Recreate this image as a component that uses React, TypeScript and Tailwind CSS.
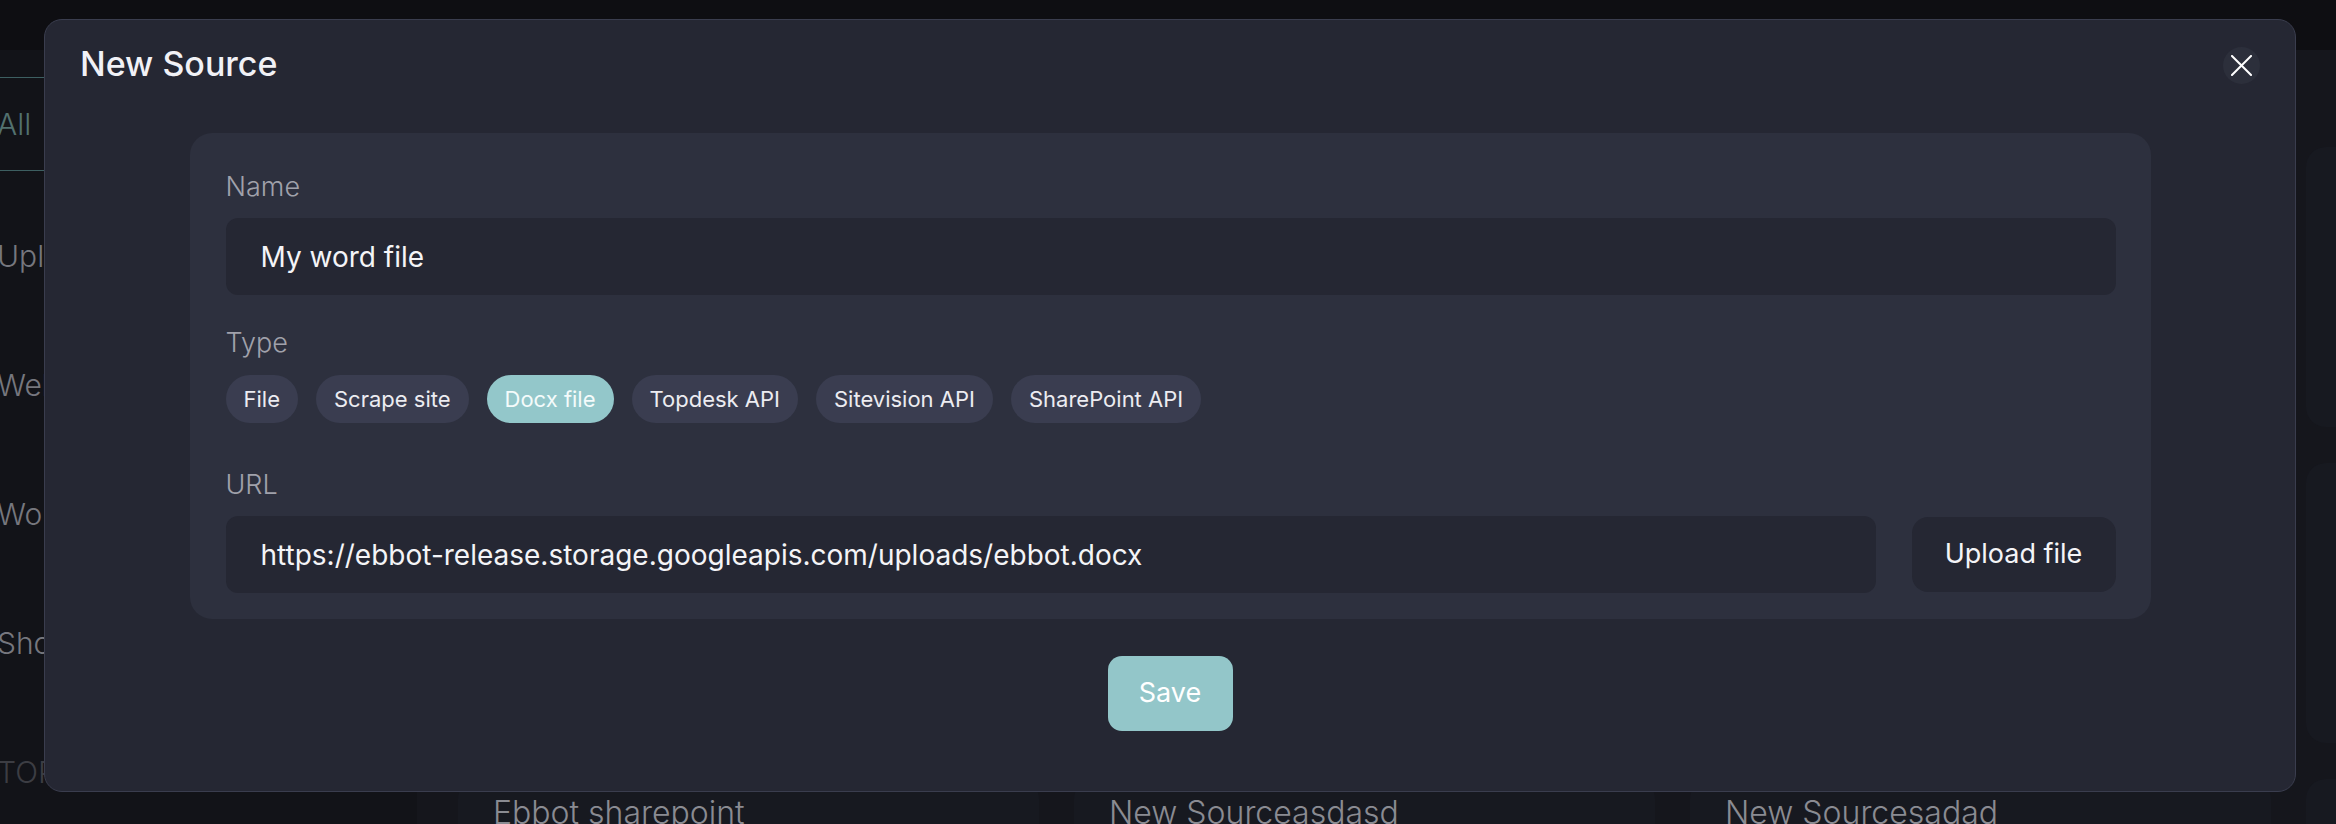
import React from "react";

const sideItems = ["Uploaded files", "Websites", "Word files", "Shortcuts", "TOPDESK"];
const cards = [
  "Ebbot website", "Help center", "Product docs", "Intranet",
  "Topdesk knowledge", "Sitevision pages", "Support FAQ", "Policies",
  "Ebbot sharepoint", "New Sourceasdasd", "New Sourcesadad", "New Source",
];
const pills = ["File", "Scrape site", "Docx file", "Topdesk API", "Sitevision API", "SharePoint API"];

function CloseIcon() {
  return (
    <svg width="21" height="21" viewBox="0 0 21 21" fill="none">
      <line x1="1" y1="1" x2="20" y2="20" stroke="#ffffff" strokeWidth="2" strokeLinecap="square" />
      <line x1="20" y1="1" x2="1" y2="20" stroke="#ffffff" strokeWidth="2" strokeLinecap="square" />
    </svg>
  );
}

export default function App() {
  return (
    <div className="relative w-[2336px] h-[824px] overflow-hidden bg-[#14151b] font-['Inter',sans-serif]">
      {/* dimmed background page */}
      <div className="h-[50px] bg-[#0e0e12]" />
      <div className="flex h-[774px]">
        <aside className="w-[417px] shrink-0 bg-[#121318] pt-[27px]">
          <div className="h-[94px] border-y border-[#3d5f61] flex items-center -ml-[3px] text-[30px] font-light text-[#52716f]">
            All
          </div>
          <div className="mt-[21px] flex flex-col">
            {sideItems.map((t, i) => (
              <div
                key={t}
                className={
                  i === 4
                    ? "h-[129px] flex items-center -ml-[3px] text-[30px] font-light text-[#3c3d43]"
                    : "h-[129px] flex items-center -ml-[3px] text-[30px] font-light text-[#76777e]"
                }
              >
                {t}
              </div>
            ))}
          </div>
        </aside>
        <main className="flex-1 bg-[#15161c] pl-[41px] pt-[97px] grid grid-cols-[repeat(4,581px)] auto-rows-[280px] gap-x-[35px] gap-y-[36px] content-start">
          {cards.map((c) => (
            <div key={c} className="rounded-[20px] bg-[#171920] pt-[18px] pl-[35px] flex items-start">
              <span className="text-[32px] leading-none font-light text-[#8a8b92]">{c}</span>
              <span className="ml-auto mr-[68px] text-[24px] leading-none text-[#8a8b92] mt-[26px]">···</span>
            </div>
          ))}
        </main>
      </div>

      {/* modal */}
      <div className="absolute left-[44px] top-[19px] w-[2252px] h-[773px] rounded-[18px] border border-[#3a3d4e] bg-[#252733] flex flex-col">
        <div className="flex items-start justify-between pl-[35px] pr-[35px] pt-[27px]">
          <h2 className="text-[34px] leading-none font-medium text-[#f1f1f6]">New Source</h2>
          <button className="w-[37px] h-[37px] rounded-full bg-[#2c2f3b] flex items-center justify-center">
            <CloseIcon />
          </button>
        </div>

        <div className="mt-[49px] mx-auto w-[1961px] rounded-[22px] bg-[#2d303e] pt-[40px] pb-[26px] pl-[36px] pr-[35px] flex flex-col">
          <div className="text-[27px] leading-none font-light text-[#a0a1ab]">Name</div>
          <div className="mt-[18px] h-[77px] rounded-[12px] bg-[#252733] flex items-center pl-[35px] text-[28px] text-[#f4f4f7]">
            My word file
          </div>

          <div className="mt-[34px] text-[27px] leading-none font-light text-[#a0a1ab]">Type</div>
          <div className="mt-[19px] flex gap-[18px]">
            {pills.map((p) => (
              <div
                key={p}
                className={
                  p === "Docx file"
                    ? "h-[48px] px-[18px] rounded-full bg-[#93c7ca] flex items-center text-[22px] text-[#f4fbfb]"
                    : "h-[48px] px-[18px] rounded-full bg-[#3a3d50] flex items-center text-[22px] text-[#ececf1]"
                }
              >
                {p}
              </div>
            ))}
          </div>

          <div className="mt-[48px] text-[27px] leading-none font-light text-[#a0a1ab]">URL</div>
          <div className="mt-[18px] flex items-center gap-[36px]">
            <div className="flex-1 h-[77px] rounded-[12px] bg-[#252733] flex items-center pl-[35px] text-[28px] text-[#f4f4f7]">
              https://ebbot-release.storage.googleapis.com/uploads/ebbot.docx
            </div>
            <button className="w-[204px] h-[75px] rounded-[16px] bg-[#252733] text-[27px] text-[#f4f4f7]">
              Upload file
            </button>
          </div>
        </div>

        <button className="mt-[37px] mx-auto w-[125px] h-[75px] rounded-[14px] bg-[#93c6c9] text-[27px] text-white">
          Save
        </button>
      </div>
    </div>
  );
}
